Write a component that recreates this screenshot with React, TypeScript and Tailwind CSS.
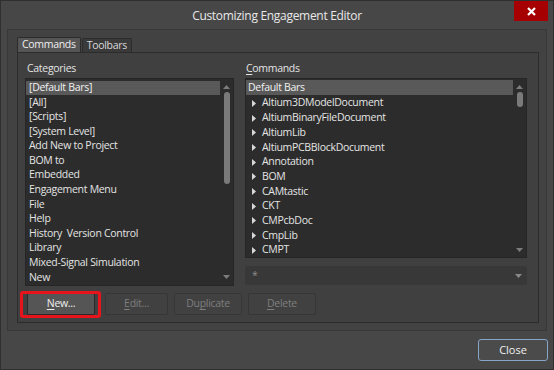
import React from "react";

const cats = [
  "[Default Bars]",
  "[All]",
  "[Scripts]",
  "[System Level]",
  "Add New to Project",
  "BOM to",
  "Embedded",
  "Engagement Menu",
  "File",
  "Help",
  "History  Version Control",
  "Library",
  "Mixed-Signal Simulation",
  "New",
];

const cmds = [
  "Altium3DModelDocument",
  "AltiumBinaryFileDocument",
  "AltiumLib",
  "AltiumPCBBlockDocument",
  "Annotation",
  "BOM",
  "CAMtastic",
  "CKT",
  "CMPcbDoc",
  "CmpLib",
  "CMPT",
];

function Up() {
  return (
    <svg width="7" height="4" viewBox="0 0 7 4">
      <path d="M0 4 L3.5 0 L7 4 Z" fill="#7c7c7c" />
    </svg>
  );
}
function Down({ c = "#7c7c7c" }: { c?: string }) {
  return (
    <svg width="7" height="4" viewBox="0 0 7 4">
      <path d="M0 0 L7 0 L3.5 4 Z" fill={c} />
    </svg>
  );
}
function Tri() {
  return (
    <svg width="4" height="7" viewBox="0 0 4 7">
      <path d="M0 0 L4 3.5 L0 7 Z" fill="#d8d8d8" />
    </svg>
  );
}

function Scroll({ thumb, bottom }: { thumb: number; bottom: number }) {
  return (
    <div className="w-[13px] flex flex-col items-center">
      <div className="mt-[6px]">
        <Up />
      </div>
      <div className="mt-[3px] w-[6px] rounded-[3px] bg-[#7a7a7a]" style={{ height: thumb }} />
      <div className="flex-1" />
      <div style={{ marginBottom: bottom }}>
        <Down />
      </div>
    </div>
  );
}

export default function App() {
  return (
    <div
      className="w-[554px] h-[370px] bg-[#474747] border border-[#2f2f2f] flex flex-col text-[#e4e4e4] overflow-hidden font-medium"
      style={{ fontFamily: '"Open Sans", "Noto Sans", sans-serif' }}
    >
      {/* title bar */}
      <div className="relative h-[28px] flex items-center justify-center">
        <span className="text-[12px] tracking-[-0.3px] text-[#e8e8e8] mt-[2px]">Customizing Engagement Editor</span>
        <div className="absolute top-0 right-[5px] w-[34px] h-[20px] bg-[#a70000] flex items-center justify-center">
          <svg width="9" height="9" viewBox="0 0 9 9">
            <path d="M1 1 L8 8 M8 1 L1 8" stroke="#ffffff" strokeWidth="2.2" />
          </svg>
        </div>
      </div>

      {/* outer panel */}
      <div className="ml-[6px] w-[540px] h-[302px] bg-[#424242] border border-[#383838] pt-[8px] pl-[9px] pr-[7px] pb-[7px] flex flex-col text-[10.5px] tracking-[-0.3px]">
        {/* tabs */}
        <div className="flex h-[14px] items-end">
          <div className="h-[15px] px-[4px] bg-[#555555] border border-b-0 border-[#2c2c2c] rounded-t-[2px] flex items-center text-[#eeeeee] z-10">
            Commands
          </div>
          <div className="h-[14px] ml-[1px] px-[4px] bg-[#3a3a3a] border border-b-0 border-[#2c2c2c] rounded-t-[2px] flex items-center text-[#d8d8d8]">
            Toolbars
          </div>
        </div>
        {/* tab content */}
        <div className="h-[271px] bg-[#404040] border border-[#2c2c2c] pt-[8px] pl-[7px] flex flex-col">
          <div className="flex gap-[11px]">
            {/* categories */}
            <div className="w-[209px] flex flex-col">
              <div className="h-[15px] pl-[2px] flex items-center">
                Cate<u className="underline-offset-2">g</u>ories
              </div>
              <div className="mt-[2px] h-[208px] bg-[#2c2c2c] border border-[#262626] flex">
                <div className="flex-1 pt-[1.5px]">
                  {cats.map((c, i) => (
                    <div
                      key={c}
                      className={`h-[14.6px] flex items-center pl-[3px] whitespace-pre ${
                        i === 0 ? "bg-[#595959] text-[#f2f2f2]" : ""
                      }`}
                    >
                      {c}
                    </div>
                  ))}
                </div>
                <Scroll thumb={92} bottom={6} />
              </div>
            </div>
            {/* commands */}
            <div className="w-[282px] flex flex-col">
              <div className="h-[15px] pl-[1px] flex items-center">
                <u className="underline-offset-2">C</u>ommands
              </div>
              <div className="mt-[2px] h-[180px] bg-[#2c2c2c] border border-[#262626] flex">
                <div className="flex-1 pt-[1px]">
                  <div className="h-[15px] flex items-center pl-[2px] bg-[#595959] text-[#f2f2f2]">Default Bars</div>
                  <div className="pt-[1px]">
                    {cmds.map((c) => (
                      <div key={c} className="h-[14.7px] flex items-center">
                        <div className="w-[16px] pl-[6px] flex items-center">
                          <Tri />
                        </div>
                        <span>{c}</span>
                      </div>
                    ))}
                  </div>
                </div>
                <Scroll thumb={15} bottom={5} />
              </div>
              <div className="mt-[8px] h-[19px] bg-[#383838] rounded-[2px] flex items-center pl-[7px] pr-[5px] text-[#8c8c8c]">
                <span className="flex-1">*</span>
                <Down c="#8a8a8a" />
              </div>
            </div>
          </div>
          {/* buttons */}
          <div className="mt-[7px] ml-[2px] flex gap-[6px] h-[22px]">
            <div className="relative w-[68px]">
              <div className="absolute -left-[7px] -top-[2px] -right-[6px] -bottom-[3px] border-[3px] border-[#e8141b] rounded-[3px]" />
              <div className="h-full bg-[#555555] border border-[#2a2a2a] rounded-[2px] flex items-center justify-center text-[#f0f0f0]">
                <span>
                  <u className="underline-offset-2">N</u>ew...
                </span>
              </div>
            </div>
            <div className="ml-[4px] w-[63px] h-full bg-[#414141] border border-[#363636] rounded-[2px] flex items-center justify-center text-[#7e7e7e]">
              <span>
                <u className="underline-offset-2">E</u>dit...
              </span>
            </div>
            <div className="w-[68px] h-full bg-[#414141] border border-[#363636] rounded-[2px] flex items-center justify-center text-[#7e7e7e]">
              <span>
                Du<u className="underline-offset-2">p</u>licate
              </span>
            </div>
            <div className="w-[68px] h-full bg-[#414141] border border-[#363636] rounded-[2px] flex items-center justify-center text-[#7e7e7e]">
              <span>
                <u className="underline-offset-2">D</u>elete
              </span>
            </div>
          </div>
        </div>
      </div>

      {/* footer */}
      <div className="flex justify-end pr-[5px] pt-[8px]">
        <div className="w-[70px] h-[22px] bg-[#4b4b4b] border border-[#86a6c8] rounded-[3px] flex items-center justify-center text-[11px] text-[#f0f0f0]">
          Close
        </div>
      </div>
    </div>
  );
}
